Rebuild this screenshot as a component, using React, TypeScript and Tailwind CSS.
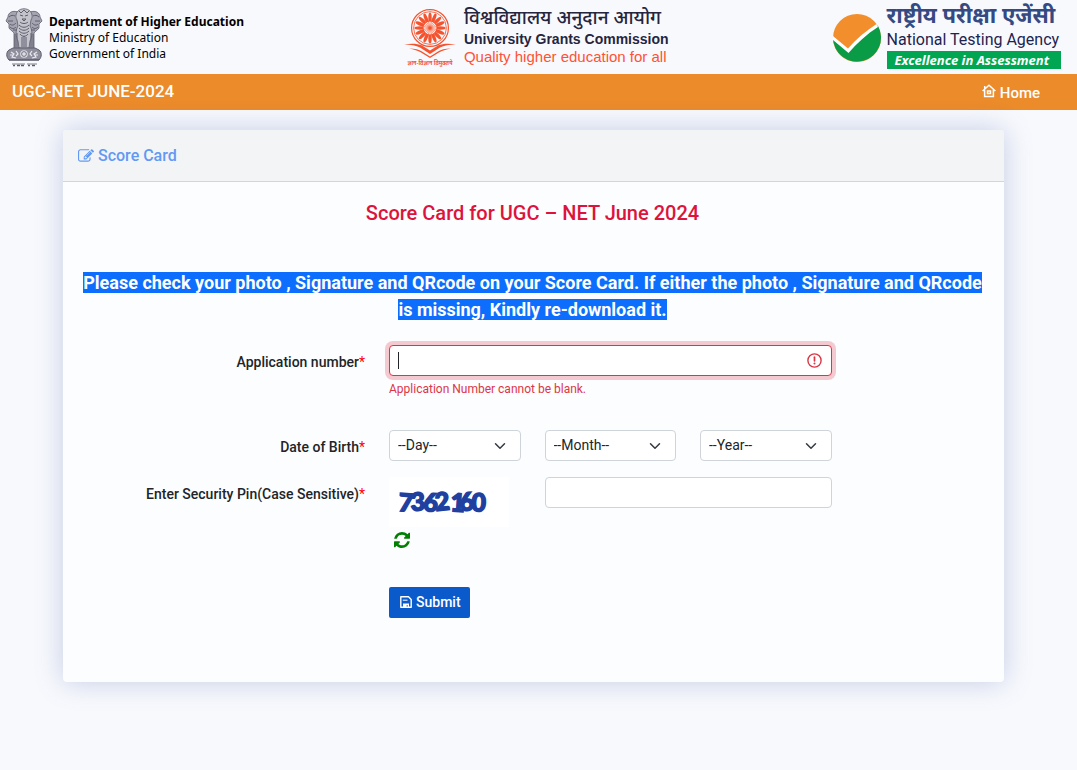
import React, { useState } from 'react';

const days = Array.from({ length: 31 }, (_, i) => String(i + 1).padStart(2, '0'));
const months = ['January', 'February', 'March', 'April', 'May', 'June', 'July', 'August', 'September', 'October', 'November', 'December'];
const years = Array.from({ length: 60 }, (_, i) => String(2006 - i));

const spokes = Array.from({ length: 24 }, (_, i) => i * 15);
const petals = Array.from({ length: 16 }, (_, i) => i * 22.5);

const StateEmblem = () => (
  <svg viewBox="0 0 38 60" className="h-[60px] w-[38px]" fill="none" stroke="#5d5d6c" aria-hidden="true">
    <g fill="#a5a5b1" strokeWidth="0.8">
      <path d="M13 4C7 2 3 5 3 9L1 13l3 3v4c2 3 4 3 5 5v15h8V10z" />
      <path d="M25 4c6-2 10 1 10 5l2 4-3 3v4c-2 3-4 3-5 5v15h-8V10z" />
      <path d="M13 3c3-3 9-3 12 0 2 2 3 6 1 9l-1 6c3 5 2 11 0 15l-1 7H14l-1-7c-2-4-3-10 0-15l-1-6c-2-3-1-7 1-9z" fill="#c3c3cc" />
    </g>
    <path d="M14 3l2 2 3-3 3 3 2-2M15 7l3 1M20 8l3-1M17 11h4l-2 2zM15 14c2 2 6 2 8 0M14 17c3 3 7 3 10 0M14 20c3 3 7 3 10 0M14 23c3 3 7 3 10 0M15 26c2 3 6 3 8 0M17 29v10M21 29v10M19 28v11" strokeWidth="1" />
    <path d="M4 9c2-2 4-2 6-1M3 13h5M5 16c2 2 4 1 6-1M5 19c2 2 4 2 6 0M8 22h4M34 9c-2-2-4-2-6-1M35 13h-5M33 16c-2 2-4 1-6-1M33 19c-2 2-4 2-6 0M30 22h-4M10 26v13M12 25v14M28 26v13M26 25v14" strokeWidth="1" />
    <path d="M8 40h22l4 2c3 2 3 7 0 10H4c-3-3-3-8 0-10z" fill="#8e8e9c" strokeWidth="1" />
    <circle cx="19" cy="46" r="4.5" fill="#dcdce3" stroke="#8e8e9c" strokeWidth="1.3" />
    <circle cx="19" cy="46" r="2.4" strokeWidth="0.8" />
    <path d="M6 44l3 2-2 3 4 1M11 43l2 3-2 2M32 44l-3 2 2 3-4 1M27 43l-2 3 2 2M5 47h3M30 47h3" stroke="#e8e8ee" strokeWidth="1.2" />
    <path d="M4 52h30" strokeWidth="1.2" />
    <path d="M7 56h13M22 56h10" strokeWidth="0.8" />
    <path d="M8 57.500h2M12 57.500h3M16 57.500h3M23 57.500h2M27 57.500h3" strokeWidth="1.5" />
  </svg>
);

const UgcLogo = () => (
  <svg viewBox="0 0 52 58" className="h-[58px] w-[52px]" fill="none" stroke="#f5532e" aria-hidden="true">
    <circle cx="26" cy="19" r="18.4" strokeWidth="1.2" />
    <circle cx="26" cy="19" r="16.4" strokeWidth="0.8" />
    {petals.map((a) => (
      <ellipse key={a} cx="26" cy="8.8" rx="1.7" ry="5.4" fill="#f5532e" stroke="none" transform={`rotate(${a} 26 19)`} />
    ))}
    <circle cx="26" cy="19" r="7" fill="#fff" strokeWidth="1.1" />
    {spokes.map((a) => (
      <path key={a} d="M26 19V12.5" strokeWidth="0.5" transform={`rotate(${a} 26 19)`} />
    ))}
    <circle cx="26" cy="19" r="1.6" fill="#f5532e" stroke="none" />
    <path d="M0 35.5c7-1 13-1 18 1l8 5 8-5c5-2 11-2 18-1-7 0-12 1-16 3l-10 6.500-10-6.500c-4-2-9-3-16-3z" fill="#f5532e" stroke="none" />
    <path d="M5 39.500c6 0 10 1 13 3l8 5 8-5c3-2 7-3 13-3-5 1-9 2-12 4l-9 5.500-9-5.500c-3-2-7-3-12-4z" fill="#f5532e" stroke="none" />
    <text x="26" y="56" textAnchor="middle" fontSize="5.5" fontWeight="700" fill="#f5532e" stroke="none" fontFamily="'Noto Sans Devanagari', 'Noto Sans', sans-serif">
      ज्ञान-विज्ञान विमुक्तये
    </text>
  </svg>
);

const NtaLogo = () => (
  <svg viewBox="0 0 48 48" className="h-12 w-12" aria-hidden="true">
    <circle cx="24" cy="24" r="24" fill="#f28e2b" />
    <path d="M0 24L15 35C23 26 33 18 45 12A24 24 0 1 1 0 24z" fill="#0a9b46" />
    <path d="M0 22l15 12.500C23 25 33 17 43.500 10l1.500 3C34 20 24 29 15.500 39L0 26z" fill="#fff" />
  </svg>
);

const HomeIcon = () => (
  <svg viewBox="0 0 14 14" className="mb-1 h-[14px] w-[14px]" fill="none" stroke="currentColor" strokeWidth="1.500" aria-hidden="true">
    <path d="M.6 7L7 1.200 13.400 7M2.600 5.800v6.700h8.800V5.800M2.700 5.500V2" />
    <path d="M5.500 7h3v2.600h-3z" />
  </svg>
);

const EditIcon = () => (
  <svg viewBox="0 0 1792 1792" className="h-4 w-4" fill="currentColor" aria-hidden="true">
    <path d="M888 1184l116-116-152-152-116 116v56h96v96h56zm440-720q-16-16-33 1l-350 350q-17 17-1 33t33-1l350-350q17-17 1-33zm80 594v190q0 119-84.5 203.5t-203.5 84.5h-832q-119 0-203.5-84.5t-84.5-203.5v-832q0-119 84.5-203.5t203.5-84.5h832q63 0 117 25 15 7 18 23 3 17-9 29l-49 49q-14 14-32 8-23-6-45-6h-832q-66 0-113 47t-47 113v832q0 66 47 113t113 47h832q66 0 113-47t47-113v-126q0-13 9-22l64-64q15-15 35-7t20 29zm-96-738l288 288-672 672h-288v-288zm444 132l-92 92-288-288 92-92q28-28 68-28t68 28l152 152q28 28 28 68t-28 68z" />
  </svg>
);

const RefreshIcon = () => (
  <svg viewBox="128 128 1536 1536" className="h-4 w-4" fill="currentColor" aria-hidden="true">
    <path d="M1639 1056q0 5-1 7-64 268-268 434.5t-478 166.5q-146 0-282.5-55t-243.5-157l-129 129q-19 19-45 19t-45-19-19-45v-448q0-26 19-45t45-19h448q26 0 45 19t19 45-19 45l-137 137q71 66 161 102t187 36q134 0 250-65t186-179q11-17 53-117 8-23 30-23h192q13 0 22.5 9.5t9.5 22.5zm25-800v448q0 26-19 45t-45 19h-448q-26 0-45-19t-19-45 19-45l138-138q-148-137-349-137-134 0-250 65t-186 179q-11 17-53 117-8 23-30 23h-199q-13 0-22.5-9.5t-9.5-22.5v-7q65-268 270-434.5t480-166.5q146 0 284 55.5t245 156.5l130-129q19-19 45-19t45 19 19 45z" />
  </svg>
);

const SaveIcon = () => (
  <svg viewBox="0 0 12 12" className="h-3 w-3" fill="none" stroke="currentColor" strokeWidth="1.400" strokeLinejoin="round" aria-hidden="true">
    <path d="M.8.8h7.700l2.700 2.700v7.700H.8z" />
    <path d="M2.800 4.200h4.700" strokeWidth="1" />
    <path d="M3 11V7.500h6V11H7.800V9.200H6.600V11z" fill="currentColor" stroke="none" />
  </svg>
);

interface DateSelectProps {
  label: string;
  options: string[];
}

const DateSelect: React.FC<DateSelectProps> = ({ label, options }) => (
  <div className="relative col-span-2">
    <select
      aria-label={label}
      className="h-[31px] w-full appearance-none rounded-sm border border-[#ced4da] bg-white px-2 pb-0.5 text-sm text-[#212529]"
    >
      <option>{`--${label}--`}</option>
      {options.map((o) => (
        <option key={o}>{o}</option>
      ))}
    </select>
    <svg viewBox="0 0 16 16" className="pointer-events-none absolute right-[15px] top-2 h-4 w-3" fill="none" stroke="#343a40" strokeWidth="2" strokeLinecap="round" strokeLinejoin="round" aria-hidden="true">
      <path d="M2 5l6 6 6-6" />
    </svg>
  </div>
);

const Required = () => <span className="font-normal text-[#ff0000]">*</span>;

export default function App() {
  const [appNo, setAppNo] = useState('');
  const [pin, setPin] = useState('');

  return (
    <div className="min-h-screen bg-[#f8f9fd] font-['Roboto',sans-serif] text-[#212529]">
      <header className="flex h-[74px] items-center justify-between pt-0.5 pl-[5px] pr-4">
        <div className="flex items-center gap-1.5">
          <StateEmblem />
          <div className="font-['Noto_Sans',sans-serif] text-xs leading-4 text-black">
            <p className="font-bold">Department of Higher Education</p>
            <p>Ministry of Education</p>
            <p>Government of India</p>
          </div>
        </div>

        <div className="mr-1 flex items-center gap-2">
          <UgcLogo />
          <div className="font-['Liberation_Sans',sans-serif] leading-[18px] text-[#25253d]">
            <p className="font-['Noto_Sans_Devanagari','Noto_Sans',serif] text-[19px] leading-5 font-medium">विश्वविद्यालय अनुदान आयोग</p>
            <p className="text-sm leading-[18px] font-bold">University Grants Commission</p>
            <p className="text-[15px] leading-[18px] text-[#ff5233]">Quality higher education for all</p>
          </div>
        </div>

        <div className="flex items-center gap-1.5">
          <NtaLogo />
          <div className="text-[#1c2450]">
            <p className="font-['Noto_Sans_Devanagari','Noto_Sans',sans-serif] text-[22px] leading-[22px] font-bold text-[#354a82]">राष्ट्रीय परीक्षा एजेंसी</p>
            <p className="font-['Roboto',sans-serif] text-base leading-[22px]">National Testing Agency</p>
            <p className="bg-[#00a651] pr-3 pl-2 font-['Noto_Sans',sans-serif] text-[13px] leading-[18px] font-bold italic text-white">Excellence in Assessment</p>
          </div>
        </div>
      </header>

      <nav className="flex h-9 items-center justify-between bg-[#eb8b2a] pl-3 pr-[37px] text-white">
        <span className="pb-0.5 text-[17px] leading-6 font-medium">UGC-NET JUNE-2024</span>
        <a href="#home" className="flex items-center gap-1 pt-0.5 text-[15px] leading-6 font-medium">
          <HomeIcon />
          Home
        </a>
      </nav>

      <main className="pt-5 pr-[73px] pb-[88px] pl-[63px]">
        <section className="rounded-sm bg-[#fcfdff] shadow-[0_0_28px_rgba(75,105,175,0.3)]">
          <div className="flex h-[52px] items-center gap-1 rounded-t-sm border-b border-[#d3d5d9] bg-[#f3f4f6] px-[15px] text-base font-medium text-[#6199f3]">
            <EditIcon />
            <h1>Score Card</h1>
          </div>

          <div className="pt-[19px] pr-[17px] pb-16 pl-[15px]">
            <h2 className="text-center text-xl leading-6 font-medium text-[#dc143c]">Score Card for UGC – NET June 2024</h2>
            <p className="mt-11 text-center text-lg leading-[27px] font-bold">
              <span className="bg-[#0d6efd] text-white">
                Please check your photo , Signature and QRcode on your Score Card. If either the photo , Signature and QRcode is missing, Kindly re-download it.
              </span>
            </p>

            <form className="mt-[22px] text-sm" onSubmit={(e) => e.preventDefault()}>
              <div className="grid grid-cols-12 gap-x-6">
                <label htmlFor="appno" className="col-span-4 pt-[7px] text-right font-medium">
                  Application number
                  <Required />
                </label>
                <div className="relative col-span-6 h-[85px]">
                  <input
                    id="appno"
                    type="text"
                    value={appNo}
                    onChange={(e) => setAppNo(e.target.value)}
                    aria-invalid="true"
                    aria-describedby="appno-error"
                    className="block h-[31px] w-full rounded-sm border border-[#dc3545] bg-white px-2 shadow-[0_0_0_4px_rgba(220,53,69,0.25)] outline-none"
                  />
                  {appNo === '' && <span className="absolute top-[7px] left-[9px] h-[17px] w-px bg-[#212529]" />}
                  <svg viewBox="0 0 15 15" className="absolute top-2 right-2.5 h-[15px] w-[15px]" fill="none" stroke="#dc3545" aria-hidden="true">
                    <circle cx="7.500" cy="7.500" r="6.600" strokeWidth="1.400" />
                    <path d="M7.500 4.200v3.600" strokeWidth="1.700" strokeLinecap="round" />
                    <circle cx="7.500" cy="10.600" r="1" fill="#dc3545" stroke="none" />
                  </svg>
                  <p id="appno-error" className="pt-1 text-xs leading-[18px] text-[#dc3545]">Application Number cannot be blank.</p>
                </div>
              </div>

              <div className="grid grid-cols-12 gap-x-6">
                <span className="col-span-4 pt-[7px] text-right font-medium">
                  Date of Birth
                  <Required />
                </span>
                <DateSelect label="Day" options={days} />
                <DateSelect label="Month" options={months} />
                <DateSelect label="Year" options={years} />
              </div>

              <div className="mt-4 grid grid-cols-12 gap-x-6">
                <label htmlFor="pin" className="col-span-4 pt-[7px] text-right font-medium">
                  Enter Security Pin(Case Sensitive)
                  <Required />
                </label>
                <div className="col-span-2">
                  <svg viewBox="0 0 120 50" className="h-[50px] w-[120px] bg-white" role="img" aria-label="Security pin">
                    <text
                      x="9 22 34 47 61 71 82"
                      y="34 34 34 34 34 34 34"
                      rotate="4 -3 3 -6 4 -4 3"
                      fontSize="25"
                      fontFamily="Lato, sans-serif"
                      fontWeight="900"
                      fill="#2040a0"
                      stroke="#2040a0"
                      strokeWidth="1.500"
                    >
                      7362160
                    </text>
                  </svg>
                  <button type="button" aria-label="Refresh security pin" className="ml-[5px] mt-[5px] block text-[#008000]">
                    <RefreshIcon />
                  </button>
                </div>
                <input
                  id="pin"
                  type="text"
                  value={pin}
                  onChange={(e) => setPin(e.target.value)}
                  className="col-span-4 h-[31px] rounded-sm border border-[#ced4da] bg-white px-2"
                />
              </div>

              <div className="mt-[39px] grid grid-cols-12 gap-x-6">
                <div className="col-span-6 col-start-5">
                  <button type="submit" className="flex h-[31px] items-center gap-1 rounded-xs bg-[#0b5acb] pr-[9px] pb-px pl-[11px] font-medium text-white">
                    <SaveIcon />
                    Submit
                  </button>
                </div>
              </div>
            </form>
          </div>
        </section>
      </main>
    </div>
  );
}
